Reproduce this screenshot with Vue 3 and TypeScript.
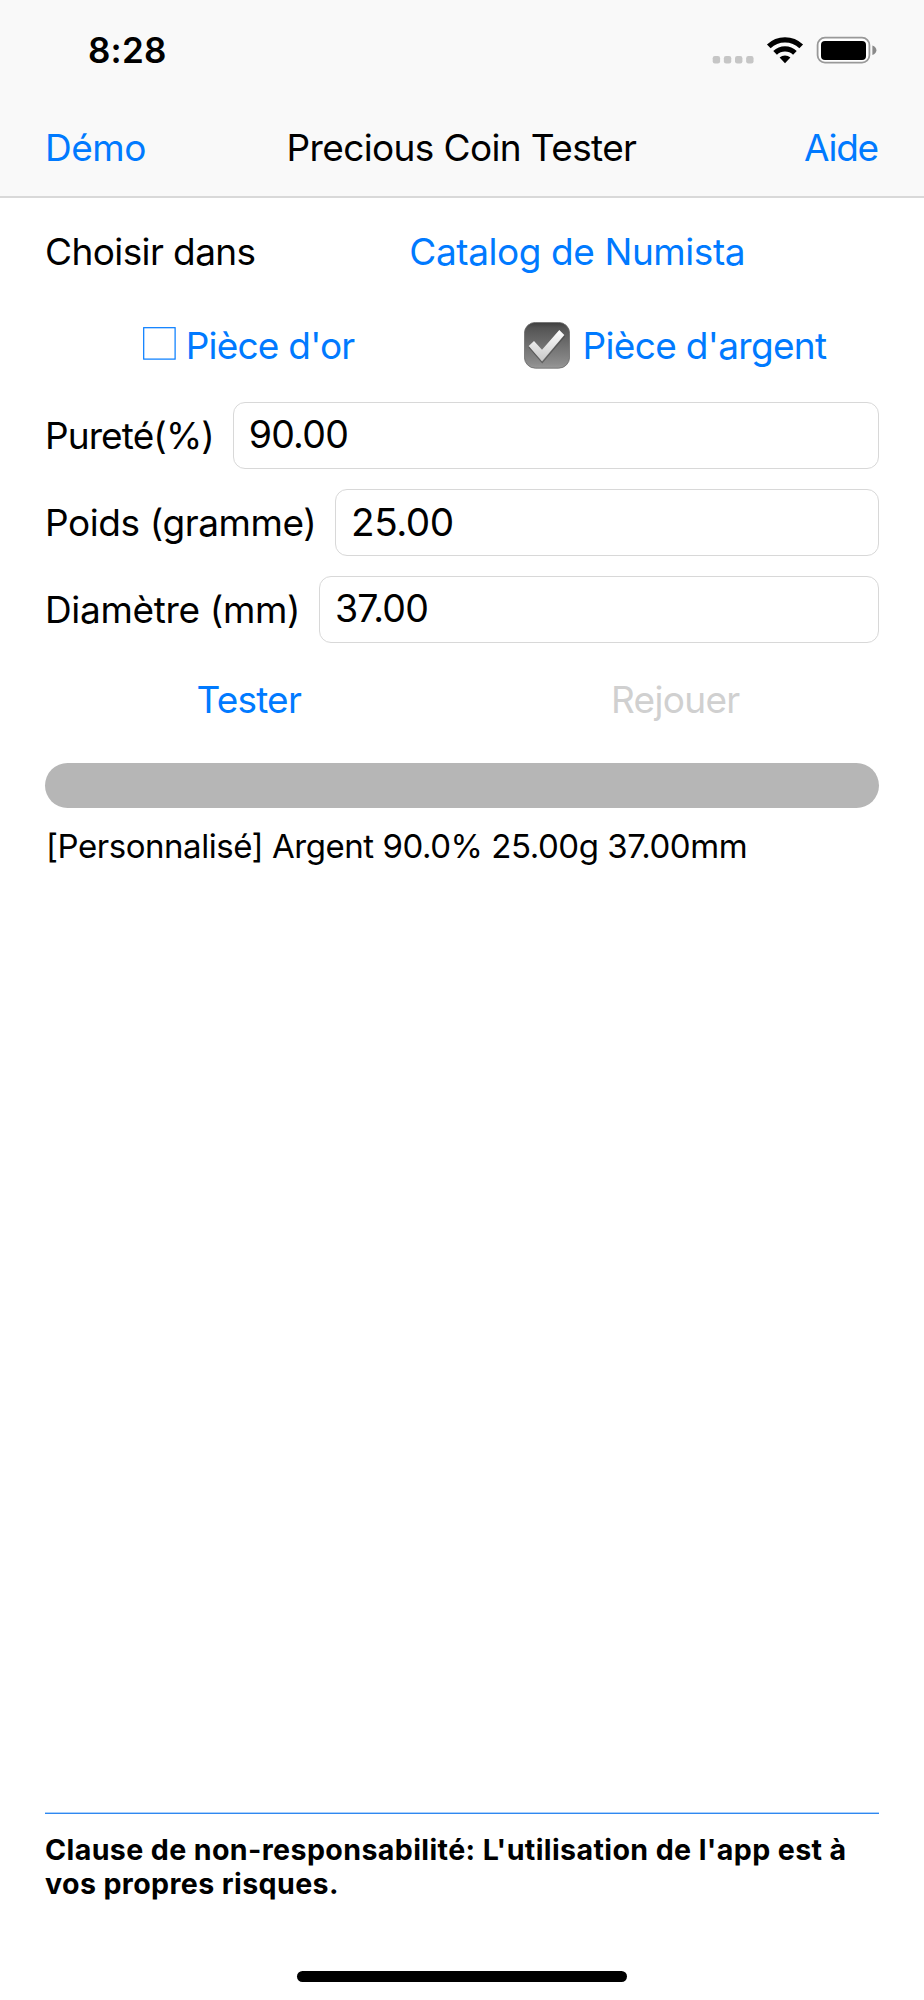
<script setup lang="ts">
import { computed, reactive, ref } from 'vue'

type Metal = 'or' | 'argent'

interface Field {
  id: 'purity' | 'weight' | 'diameter'
  label: string
}

const metal = ref<Metal>('argent')
const values = reactive({ purity: '90.00', weight: '25.00', diameter: '37.00' })

const fields: Field[] = [
  { id: 'purity', label: 'Pureté(%)' },
  { id: 'weight', label: 'Poids (gramme)' },
  { id: 'diameter', label: 'Diamètre (mm)' },
]

const metals: { id: Metal; label: string }[] = [
  { id: 'or', label: "Pièce d'or" },
  { id: 'argent', label: "Pièce d'argent" },
]

const summary = computed(() => {
  const name = metal.value === 'or' ? 'Or' : 'Argent'
  const purity = Number(values.purity).toFixed(1)
  return `[Personnalisé] ${name} ${purity}% ${values.weight}g ${values.diameter}mm`
})
</script>

<template>
  <div class="screen">
    <header class="top">
      <div class="status">
        <span class="time">8:28</span>
        <svg class="indicators" width="166" height="28" viewBox="0 0 166 28">
          <g fill="#c6c6c6">
            <rect v-for="i in 4" :key="i" :x="0.7 + (i - 1) * 11.15" y="20" width="7.4" height="7.4" rx="2.2" />
          </g>
          <g fill="none" stroke="#000" stroke-width="5.3">
            <path d="M56.8 10.3A23.4 23.4 0 0 1 89.2 10.3" />
            <path d="M63.1 16.8A14.4 14.4 0 0 1 82.9 16.8" />
          </g>
          <path d="M67.6 21.6A8 8 0 0 1 78.4 21.6L73 27.2Z" />
          <rect x="105.6" y="1.6" width="51.8" height="25" rx="7.4" fill="#fff" stroke="#999" stroke-width="1.8" />
          <rect x="109" y="5" width="45" height="19" rx="4" />
          <path d="M160.4 9.6Q164.4 11 164.4 14.3T160.4 19Z" fill="#8a8a8a" />
        </svg>
      </div>
      <nav class="nav">
        <button class="link demo">Démo</button>
        <h1 class="title">Precious Coin Tester</h1>
        <button class="link help">Aide</button>
      </nav>
    </header>

    <main class="content">
      <div class="choose">
        <span class="choose-label">Choisir dans</span>
        <button class="link catalog">Catalog de Numista</button>
      </div>

      <div class="pair metals">
        <button v-for="m in metals" :key="m.id" class="link metal" :class="m.id" @click="metal = m.id">
          <svg v-if="metal === m.id" class="checked" width="46" height="47" viewBox="0 0 46 47">
            <defs>
              <linearGradient id="tile" x1="0" y1="0" x2="0" y2="1">
                <stop offset="0" stop-color="#3e3e3e" />
                <stop offset="0.12" stop-color="#545454" />
                <stop offset="0.9" stop-color="#8c8c8c" />
                <stop offset="1" stop-color="#999" />
              </linearGradient>
              <linearGradient id="tick" x1="0" y1="0" x2="0" y2="1">
                <stop offset="0" stop-color="#fff" />
                <stop offset="1" stop-color="#c8c8c8" />
              </linearGradient>
            </defs>
            <rect x="0.4" y="0.4" width="45.2" height="45.8" rx="11" fill="url(#tile)" stroke="#6a6a6a" stroke-width="0.8" />
            <path d="M5 25.2L18.2 40.6L40.6 14.2" fill="none" stroke="#444" stroke-width="1.2" opacity="0.6" />
            <path d="M4.7 24L10 19L18 27.7L35.3 8L40.3 13L18 39.3Z" fill="url(#tick)" />
          </svg>
          <svg v-else class="unchecked" width="33" height="33" viewBox="0 0 33 33">
            <rect x="0.7" y="0.7" width="31.4" height="31.4" fill="none" stroke="#007aff" stroke-width="1.2" />
          </svg>
          <span>{{ m.label }}</span>
        </button>
      </div>

      <div class="fields">
        <div v-for="f in fields" :key="f.id" class="field" :class="f.id">
          <label class="field-label" :for="f.id">{{ f.label }}</label>
          <input :id="f.id" v-model="values[f.id]" class="field-input" type="text" />
        </div>
      </div>

      <div class="pair actions">
        <button class="link test">Tester</button>
        <button class="link replay" disabled>Rejouer</button>
      </div>

      <div class="meter"></div>
      <p class="summary">{{ summary }}</p>
    </main>

    <footer class="foot">
      <p class="disclaimer">
        Clause de non-responsabilité: L'utilisation de l'app est à<br />
        <span>vos propres risques.</span>
      </p>
      <div class="home"></div>
    </footer>
  </div>
</template>

<style>
body {
  margin: 0;
  background: #fff;
}
</style>

<style scoped>
.screen {
  display: flex;
  flex-direction: column;
  box-sizing: border-box;
  width: 924px;
  height: 2000px;
  overflow: hidden;
  background: #fff;
  color: #000;
  font-family: Inter, 'Liberation Sans', sans-serif;
  font-size: 37px;
  line-height: 46px;
}

.top {
  background: #f9f9f9;
  border-bottom: 2px solid #d9d9d9;
}

.status {
  display: flex;
  align-items: center;
  justify-content: space-between;
  height: 100px;
  padding: 0 46px 0 88px;
}

.time {
  font-size: 35px;
  font-weight: 600;
  letter-spacing: 0.21px;
}

.nav {
  display: grid;
  grid-template-columns: 1fr auto 1fr;
  align-items: center;
  height: 94px;
  padding: 1px 46px 1px 45px;
}

.link {
  margin: 0;
  padding: 0;
  border: 0;
  background: none;
  color: #007aff;
  font: inherit;
  white-space: nowrap;
  cursor: pointer;
}

.demo {
  justify-self: start;
  letter-spacing: -0.46px;
}

.title {
  margin: 0;
  font-size: 37px;
  font-weight: 400;
  letter-spacing: -0.63px;
}

.help {
  justify-self: end;
  letter-spacing: -1.2px;
}

.content {
  display: flex;
  flex: 1;
  flex-direction: column;
  padding: 0 45px;
}

.choose {
  display: flex;
  align-items: center;
  gap: 20px;
  height: 107px;
}

.choose-label {
  letter-spacing: -0.6px;
}

.catalog {
  flex: 1;
  letter-spacing: -0.42px;
}

.pair {
  display: grid;
  grid-template-columns: 1fr 1fr;
  column-gap: 19px;
  align-items: center;
}

.metals {
  height: 81px;
}

.metal {
  display: flex;
  align-items: center;
  justify-content: center;
}

.metal.or {
  letter-spacing: -0.78px;
}

.metal.argent {
  letter-spacing: -0.67px;
}

.unchecked {
  margin: 0 9.7px 4px 0;
}

.checked {
  margin-right: 12.5px;
}

.fields {
  display: flex;
  flex-direction: column;
  gap: 20px;
  margin-top: 16px;
}

.field {
  display: flex;
  align-items: center;
  gap: 19px;
  height: 67px;
}

.field-label {
  white-space: nowrap;
}

.field-input {
  box-sizing: border-box;
  flex: 1;
  min-width: 0;
  height: 67px;
  padding: 0 14.7px 2px;
  border: 1px solid #d8d8d8;
  border-radius: 12px;
  outline: none;
  background: #fff;
  color: #000;
  font: inherit;
  font-size: 37.5px;
}

.purity .field-label {
  letter-spacing: -0.9px;
}

.purity .field-input {
  letter-spacing: -0.74px;
}

.weight .field-label {
  letter-spacing: -0.41px;
}

.weight .field-input {
  font-size: 38.7px;
  letter-spacing: -0.5px;
}

.diameter .field-label {
  letter-spacing: -0.34px;
}

.diameter .field-input {
  letter-spacing: -0.7px;
}

.actions {
  height: 114px;
}

.test {
  letter-spacing: -0.8px;
}

.replay {
  color: #d0d0d0;
  letter-spacing: -0.7px;
  cursor: default;
}

.meter {
  height: 45px;
  margin-top: 6px;
  border-radius: 23px;
  background: #b6b6b6;
}

.summary {
  margin: 18px 0 0;
  padding-left: 1px;
  font-size: 33px;
  line-height: 40px;
  letter-spacing: -0.46px;
  white-space: nowrap;
}

.foot {
  display: flex;
  flex-direction: column;
  justify-content: space-between;
  box-sizing: border-box;
  height: 188px;
  padding-bottom: 18px;
}

.disclaimer {
  margin: 0 45px;
  padding-top: 20px;
  border-top: 1px solid #a9d0fb;
  box-shadow: inset 0 1px 0 #2f88f0;
  font-size: 28.6px;
  font-weight: 700;
  line-height: 34px;
  letter-spacing: 0.38px;
  white-space: nowrap;
}

.home {
  align-self: center;
  width: 330px;
  height: 11px;
  border-radius: 6px;
  background: #000;
}
</style>
